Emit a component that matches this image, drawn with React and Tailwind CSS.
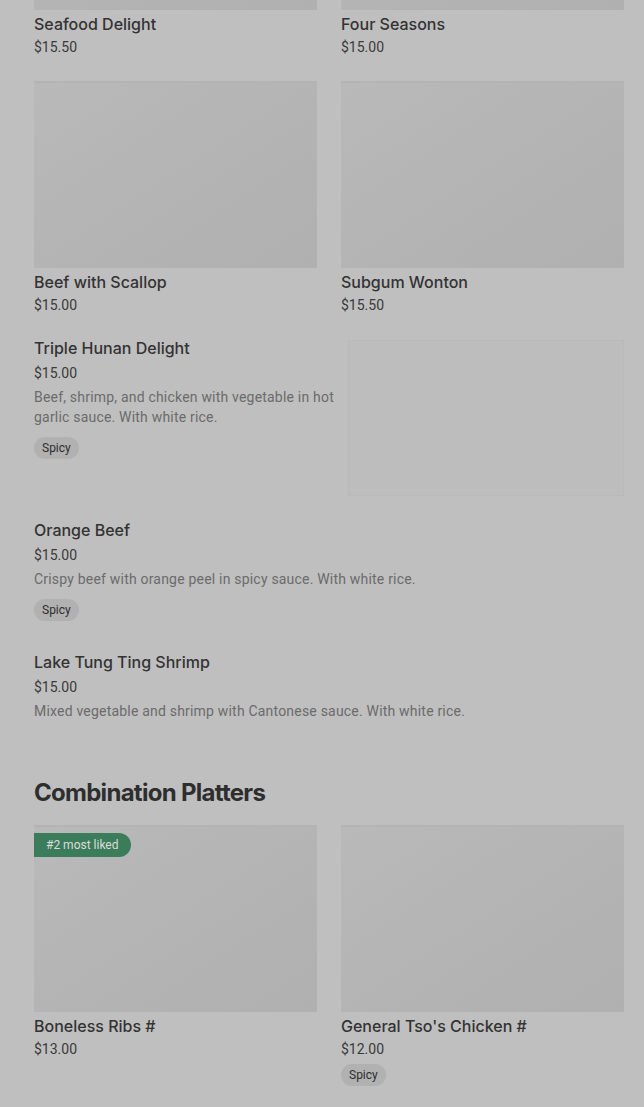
import React from 'react';

const font = { fontFamily: 'Roboto, "Liberation Sans", sans-serif' };
const titleFont = { fontFamily: 'Inter, Roboto, "Liberation Sans", sans-serif' };

const gridTop = [
    { name: 'Seafood Delight', price: '$15.50' },
    { name: 'Four Seasons', price: '$15.00' },
    { name: 'Beef with Scallop', price: '$15.00' },
    { name: 'Subgum Wonton', price: '$15.50' },
];

const listItems = [
    {
        name: 'Triple Hunan Delight',
        price: '$15.00',
        desc: 'Beef, shrimp, and chicken with vegetable in hot garlic sauce. With white rice.',
        spicy: true,
        image: true,
    },
    {
        name: 'Orange Beef',
        price: '$15.00',
        desc: 'Crispy beef with orange peel in spicy sauce. With white rice.',
        spicy: true,
    },
    {
        name: 'Lake Tung Ting Shrimp',
        price: '$15.00',
        desc: 'Mixed vegetable and shrimp with Cantonese sauce. With white rice.',
    },
];

const platters = [
    { name: 'Boneless Ribs #', price: '$13.00', badge: '#2 most liked' },
    { name: "General Tso's Chicken #", price: '$12.00', spicy: true },
];

const SpicyTag = () => (
    <span className="inline-flex items-center h-[22px] px-2 rounded-full bg-[#b1b1b1] text-[12px] text-[#2e2e2e]">
        Spicy
    </span>
);

const GridCard = ({ item }) => (
    <div className="flex flex-col">
        <div className="relative h-[187px] bg-gradient-to-br from-[#b9b9b9] via-[#b4b4b4] to-[#b0b0b0] border-t-2 border-[#b3b3b3]">
            {item.badge && (
                <div className="absolute left-0 top-[6px] h-6 px-3 flex items-center rounded-r-full bg-[#3b7c5a] text-[12px] text-[#dcdcdc]">
                    {item.badge}
                </div>
            )}
        </div>
        <h3 className="mt-0.5 text-[16px] leading-6 font-medium text-[#333333]" style={titleFont}>
            {item.name}
        </h3>
        <p className="mt-px text-[14px] leading-5 text-[#3a3a3a]">{item.price}</p>
        {item.spicy && (
            <div className="mt-[3px]">
                <SpicyTag />
            </div>
        )}
    </div>
);

const ListRow = ({ item, className = '' }) => (
    <div className={`flex gap-[14px] ${className}`}>
        <div className="flex-1 min-w-0 flex flex-col">
            <h3 className="text-[16px] leading-6 font-medium text-[#333333]" style={titleFont}>
                {item.name}
            </h3>
            <p className="mt-[3px] text-[14px] leading-5 text-[#3a3a3a]">{item.price}</p>
            <p className="mt-1 text-[14px] leading-5 tracking-[0.2px] text-[#6b6b6b]">{item.desc}</p>
            {item.spicy && (
                <div className="mt-[8px]">
                    <SpicyTag />
                </div>
            )}
        </div>
        {item.image && (
            <div className="mt-1 w-[276px] h-[156px] shrink-0 bg-[#bdbdbd] border border-[#b9b9b9]" />
        )}
    </div>
);

export default function App() {
    return (
        <div className="min-h-[1107px] bg-[#bfbfbf] overflow-hidden" style={font}>
            <div className="pl-[34px] pr-5 pb-10">
                <div className="-mt-[177px] grid grid-cols-2 gap-x-6 gap-y-6">
                    {gridTop.map((item) => (
                        <GridCard key={item.name} item={item} />
                    ))}
                </div>

                <div className="mt-[21px] flex flex-col">
                    <ListRow item={listItems[0]} />
                    <ListRow item={listItems[1]} className="mt-[22px]" />
                    <ListRow item={listItems[2]} className="mt-[29px]" />
                </div>

                <h2
                    className="mt-[56px] text-[24px] leading-8 font-bold tracking-[-0.03em] text-[#2e2e2e]"
                    style={titleFont}
                >
                    Combination Platters
                </h2>

                <div className="mt-[16px] grid grid-cols-2 gap-x-6 gap-y-6">
                    {platters.map((item) => (
                        <GridCard key={item.name} item={item} />
                    ))}
                </div>
            </div>
        </div>
    );
}
